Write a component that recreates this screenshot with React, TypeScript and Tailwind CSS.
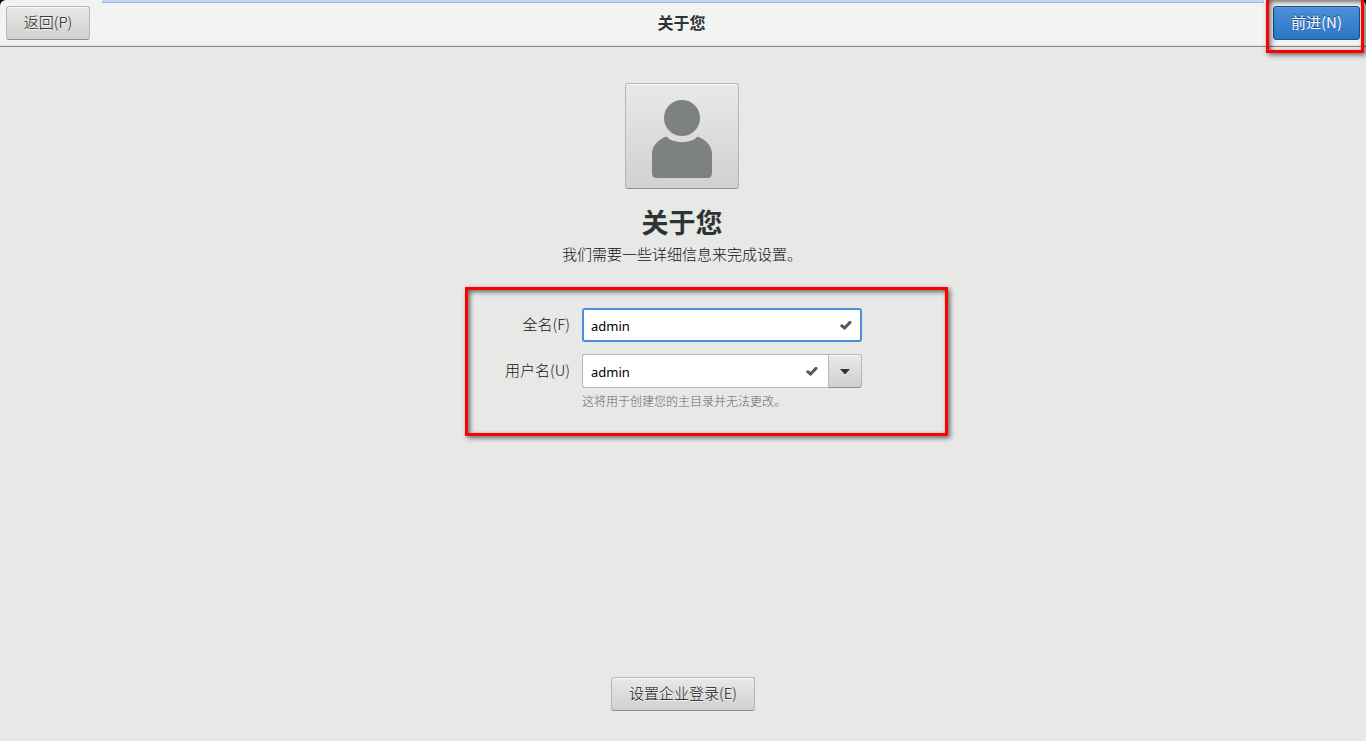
import React, { useState } from 'react';

const uiFont = "font-['Noto_Sans_CJK_SC','Noto_Sans',sans-serif]";
const entryFont = "font-['Noto_Sans','Noto_Sans_CJK_SC',sans-serif]";
const plainButton =
  'border border-[#b6b6b3] border-b-[#91918c] rounded-[3px] bg-linear-to-b from-[#e9e9e7] to-[#d0d0ce] shadow-[inset_0_1px_#f8f8f7] text-[#101415] [text-shadow:0_1px_#ffffffc4]';

function Check() {
  return (
    <svg aria-hidden="true" viewBox="0 0 12 10" className="h-[10px] w-[12px] shrink-0">
      <path d="M1.800 5.800 4.600 8 10 2.400" fill="none" stroke="#555a5a" strokeWidth="3" strokeLinecap="round" />
    </svg>
  );
}

function Highlight({ className }: { className: string }) {
  return (
    <div
      aria-hidden="true"
      className={`pointer-events-none absolute border-3 border-[#fe0000] shadow-[2px_2px_5px_#00000090,inset_2px_2px_5px_#00000090] ${className}`}
    />
  );
}

export default function App() {
  const [fullName, setFullName] = useState('admin');
  const [userName, setUserName] = useState('admin');

  return (
    <div className={`flex min-h-screen flex-col bg-[#e8e8e6] text-[15px] leading-[22px] font-light text-[#101415] ${uiFont}`}>
      <div className="bg-black">
        <header className="relative flex h-[47px] items-center justify-between rounded-t-[6px] border-b border-[#8b8b87] bg-[#f3f3f3] px-[6px] shadow-[inset_0_-1px_#dededc]">
          <div aria-hidden="true" className="absolute top-0 right-[102px] left-[102px] h-[3px] border-b border-[#94bce8] bg-[#c4d7ef]" />
          <button type="button" className={`h-[34px] w-[84px] pb-[2px] ${plainButton}`}>
            返回(P)
          </button>
          <h1 className="pb-[2px] text-[16px] font-bold text-[#2e3436]">关于您</h1>
          <div className="relative">
            <button
              type="button"
              className="h-[34px] w-[87px] rounded-[3px] border border-[#1c5187] bg-linear-to-b from-[#4a90d9] to-[#2a76c6] pb-[2px] font-normal text-white shadow-[inset_0_1px_#5b9add] [text-shadow:0_-1px_#184472]"
            >
              前进(N)
            </button>
            <Highlight className="-top-[9px] -right-[4px] -bottom-[13px] -left-[7px]" />
          </div>
        </header>
      </div>

      <main className="flex flex-1 flex-col items-center pt-[36px] pb-[30px]">
        <section className="flex w-full flex-col items-center pr-[2px]">
          <button
            type="button"
            aria-label="头像"
            className={`flex h-[106px] w-[114px] items-center justify-center ${plainButton}`}
          >
            <svg aria-hidden="true" viewBox="0 0 60 78" className="mt-[6px] h-[78px] w-[60px]" fill="#7d8181">
              <circle cx="30" cy="18" r="18" />
              <path d="M14.500 36.500C21 44 39 44 45.500 36.500C54 39.500 60 46 60 54V73Q60 78 55 78H5Q0 78 0 73V54C0 46 6 39.500 14.500 36.500Z" />
            </svg>
          </button>
          <h2 className="mt-[14px] text-[27px] leading-[38px] font-bold text-[#2e3436]">关于您</h2>
          <p className="leading-[26px]">我们需要一些详细信息来完成设置。</p>

          <form
            className="relative mt-[41px] grid grid-cols-[68px_280px] items-center gap-[12px]"
            onSubmit={(e) => e.preventDefault()}
          >
            <label htmlFor="full-name" className="pb-[2px] text-right whitespace-nowrap">
              全名(F)
            </label>
            <div className="flex h-[34px] items-center rounded-[3px] border-2 border-[#4a90d9] bg-white pr-[8px] pl-[7px]">
              <input
                id="full-name"
                value={fullName}
                onChange={(e) => setFullName(e.target.value)}
                className={`min-w-0 flex-1 pt-px text-[13px] leading-[20px] font-normal text-black outline-none ${entryFont}`}
              />
              <Check />
            </div>
            <label htmlFor="user-name" className="pb-[2px] text-right whitespace-nowrap">
              用户名(U)
            </label>
            <div className="flex h-[34px]">
              <div className="flex flex-1 items-center rounded-l-[3px] border border-r-0 border-[#b6b6b3] bg-white pr-[10px] pl-[8px]">
                <input
                  id="user-name"
                  value={userName}
                  onChange={(e) => setUserName(e.target.value)}
                  className={`min-w-0 flex-1 pt-px text-[13px] leading-[20px] font-normal text-black outline-none ${entryFont}`}
                />
                <Check />
              </div>
              <button
                type="button"
                aria-label="用户名建议"
                className={`flex w-[34px] items-center justify-center rounded-l-none ${plainButton}`}
              >
                <svg aria-hidden="true" viewBox="0 0 10 5" className="h-[5px] w-[10px]" fill="#2e3436">
                  <path d="M0 0H10L5.500 5H4.500Z" />
                </svg>
              </button>
            </div>
            <p className="col-start-2 -mt-[8px] pb-[2px] text-[12px] leading-[18px] text-[#646869]">
              这将用于创建您的主目录并无法更改。
            </p>
            <Highlight className="-top-[21px] -right-[86px] -bottom-[24px] -left-[37px]" />
          </form>
        </section>

        <button type="button" className={`mt-auto h-[34px] w-[144px] pb-[2px] ${plainButton}`}>
          设置企业登录(E)
        </button>
      </main>
    </div>
  );
}
